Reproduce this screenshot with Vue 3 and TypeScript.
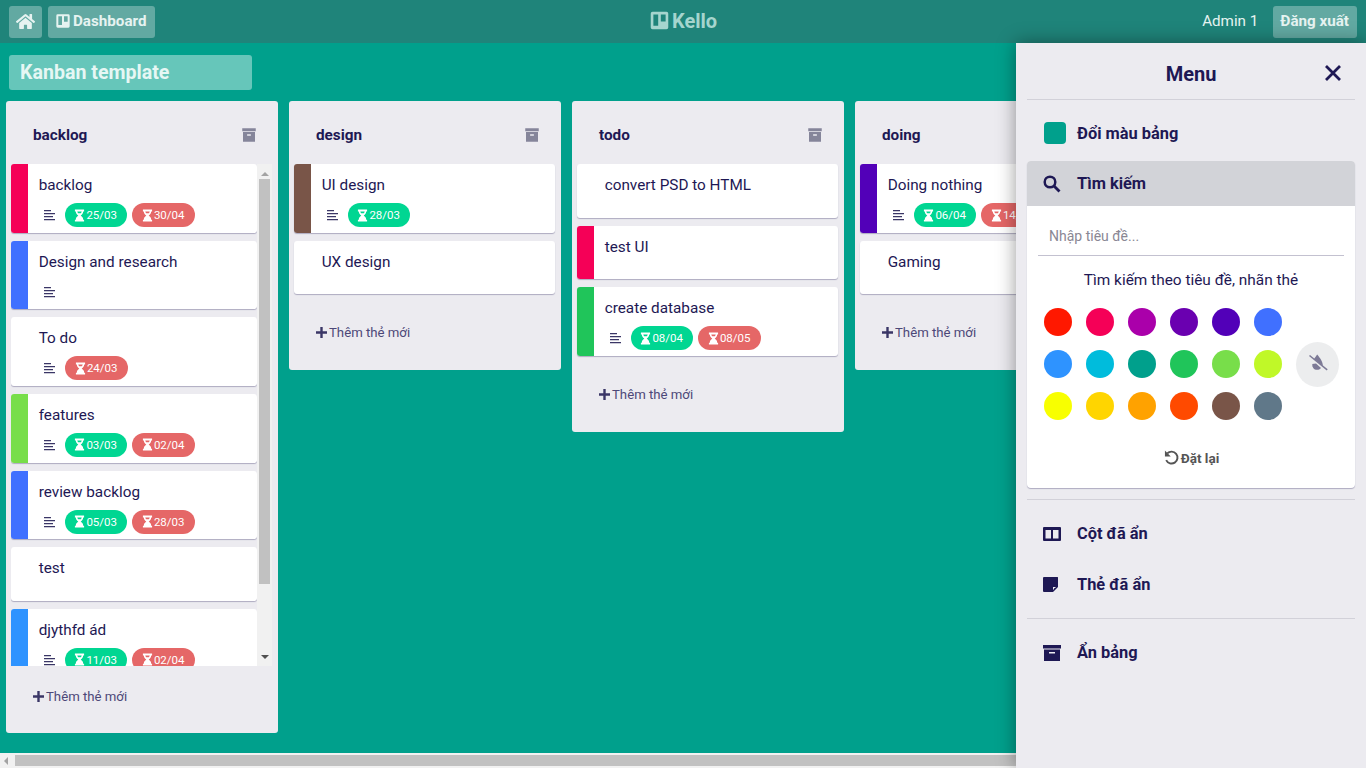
<script setup lang="ts">
interface Card {
  title: string
  color?: string
  lines?: boolean
  start?: string
  end?: string
}
interface Column {
  name: string
  cards: Card[]
  scroll?: boolean
}

const columns: Column[] = [
  {
    name: 'backlog',
    scroll: true,
    cards: [
      { title: 'backlog', color: '#f50057', lines: true, start: '25/03', end: '30/04' },
      { title: 'Design and research', color: '#4070ff', lines: true },
      { title: 'To do', lines: true, end: '24/03' },
      { title: 'features', color: '#78de4a', lines: true, start: '03/03', end: '02/04' },
      { title: 'review backlog', color: '#4070ff', lines: true, start: '05/03', end: '28/03' },
      { title: 'test' },
      { title: 'djythfd ád', color: '#2e93ff', lines: true, start: '11/03', end: '02/04' },
    ],
  },
  {
    name: 'design',
    cards: [
      { title: 'UI design', color: '#795548', lines: true, start: '28/03' },
      { title: 'UX design' },
    ],
  },
  {
    name: 'todo',
    cards: [
      { title: 'convert PSD to HTML' },
      { title: 'test UI', color: '#f50057' },
      { title: 'create database', color: '#20c55a', lines: true, start: '08/04', end: '08/05' },
    ],
  },
  {
    name: 'doing',
    cards: [
      { title: 'Doing nothing', color: '#5200b8', lines: true, start: '06/04', end: '14/04' },
      { title: 'Gaming' },
    ],
  },
]

const swatches = [
  '#ff1800', '#f50057', '#aa00aa', '#6a00b0', '#5200b8', '#4070ff',
  '#2e93ff', '#00bcdc', '#00a08c', '#20c55a', '#78de4a', '#c0f828',
  '#f8ff00', '#ffd500', '#ffa200', '#ff4a00', '#795548', '#607889',
]

const archivePath = 'M3 3h18v4H3zM4 8h16v13H4zM9.500 11v2h5v-2z'
const boardPath = 'M4 2h16a2 2 0 0 1 2 2v16a2 2 0 0 1-2 2H4a2 2 0 0 1-2-2V4a2 2 0 0 1 2-2zM5 5v13h5.500V5zM13.500 5v8H19V5z'
const hourglassPath = 'M1 0h10v2H10c0 2-1 3.200-2.700 4.500C9 7.800 10 9 10 11h1v2H1v-2h1c0-2 1-3.200 2.700-4.500C3 5.200 2 4 2 2H1zM3.600 2c.1 1 .5 1.500 1 2h2.800c.5-.5.9-1 1-2z'
</script>

<template>
  <div class="app">
    <header class="topbar">
      <div class="top-left">
        <button class="top-btn icon-only">
          <svg width="19" height="17" viewBox="0 0 576 512"><path fill="currentColor" d="M280.400 148.300 96 300.100V464a16 16 0 0 0 16 16l112-.3a16 16 0 0 0 15.900-16V368a16 16 0 0 1 16-16h64a16 16 0 0 1 16 16v95.600a16 16 0 0 0 16 16.100l112 .3a16 16 0 0 0 16-16V300L295.700 148.300a12.200 12.200 0 0 0-15.300 0zM571.600 251.500 488 182.600V44.100a12 12 0 0 0-12-12h-56a12 12 0 0 0-12 12v72.600L318.500 43a48 48 0 0 0-61 0L4.300 251.500a12 12 0 0 0-1.600 16.900l25.500 31A12 12 0 0 0 45.200 301l235.200-193.700a12.200 12.200 0 0 1 15.300 0L530.900 301a12 12 0 0 0 16.900-1.600l25.500-31a12 12 0 0 0-1.700-16.900z"/></svg>
        </button>
        <button class="top-btn">
          <svg width="16" height="16" viewBox="0 0 24 24"><path fill="currentColor" fill-rule="evenodd" :d="boardPath"/></svg>
          Dashboard
        </button>
      </div>
      <div class="logo">
        <svg width="21" height="21" viewBox="0 0 24 24"><path fill="currentColor" fill-rule="evenodd" :d="boardPath"/></svg>
        Kello
      </div>
      <div class="top-right">
        <span class="user">Admin 1</span>
        <button class="top-btn">Đăng xuất</button>
      </div>
    </header>

    <main class="board">
      <div class="board-title">Kanban template</div>
      <div class="columns">
        <section v-for="col in columns" :key="col.name" class="column">
          <div class="col-head">
            <span class="col-name">{{ col.name }}</span>
            <svg class="col-archive" width="18" height="18" viewBox="0 0 24 24"><path fill="currentColor" fill-rule="evenodd" :d="archivePath"/></svg>
          </div>
          <div class="col-body" :class="{ scrolling: col.scroll }">
            <div class="card-list">
              <article v-for="card in col.cards" :key="card.title" class="card" :class="{ tall: card.lines }">
                <span class="stripe" :style="{ background: card.color || 'transparent' }"></span>
                <div class="card-main">
                  <div class="card-title">{{ card.title }}</div>
                  <div v-if="card.lines" class="card-meta">
                    <svg class="lines" width="11" height="12" viewBox="0 0 11 12"><path fill="#3a3666" d="M0 1h7v1.200H0zM0 4h11v1.200H0zM0 7h9v1.200H0zM0 10h11v1.200H0z"/></svg>
                    <span v-if="card.start" class="badge green">
                      <svg width="11" height="13" viewBox="0 0 12 13"><path fill="#fff" fill-rule="evenodd" :d="hourglassPath"/></svg>{{ card.start }}
                    </span>
                    <span v-if="card.end" class="badge red">
                      <svg width="11" height="13" viewBox="0 0 12 13"><path fill="#fff" fill-rule="evenodd" :d="hourglassPath"/></svg>{{ card.end }}
                    </span>
                  </div>
                </div>
              </article>
            </div>
            <div v-if="col.scroll" class="vscroll">
              <span class="arrow up"></span>
              <span class="vthumb"></span>
              <span class="arrow down"></span>
            </div>
          </div>
          <div class="add-card">
            <svg width="11" height="11" viewBox="0 0 12 12"><path fill="#3a3666" d="M4.700 0h2.600v4.700H12v2.600H7.300V12H4.700V7.300H0V4.700h4.700z"/></svg>
            Thêm thẻ mới
          </div>
        </section>
      </div>
    </main>

    <div class="hscroll">
      <span class="arrow left"></span>
      <span class="hthumb"></span>
    </div>

    <aside class="menu">
      <div class="menu-head">
        <span>Menu</span>
        <svg class="menu-close" width="18" height="18" viewBox="0 0 18 18"><path d="M2 2l14 14M16 2L2 16" stroke="#1e1854" stroke-width="2.800" fill="none"/></svg>
      </div>
      <div class="menu-row color-row">
        <span class="board-color"></span>
        Đổi màu bảng
      </div>
      <div class="search-box">
        <div class="search-head">
          <svg width="18" height="18" viewBox="0 0 18 18"><circle cx="7" cy="7" r="5.300" fill="none" stroke="#1e1854" stroke-width="2.500"/><path d="M11 11L16.500 16.500" stroke="#1e1854" stroke-width="2.800"/></svg>
          Tìm kiếm
        </div>
        <div class="search-body">
          <input class="search-input" type="text" placeholder="Nhập tiêu đề..." />
          <p class="hint">Tìm kiếm theo tiêu đề, nhãn thẻ</p>
          <div class="palette">
            <div class="dots">
              <span v-for="c in swatches" :key="c" class="dot" :style="{ background: c }"></span>
            </div>
            <button class="no-color">
              <svg width="20" height="20" viewBox="0 0 20 20"><path fill="#7d7a96" d="M9.200.5L6 5l8.800 7C15 8 12 4 9.200.5z"/><path fill="#7d7a96" d="M4.300 10L8 9.500l5 4.500c-1 1.300-2.500 1.800-4 1.800-3 0-5-2.300-4.700-5.800z"/><path d="M1.500 1.500L19.200 15.800" stroke="#7d7a96" stroke-width="1.500"/></svg>
            </button>
          </div>
          <div class="reset">
            <svg width="17" height="17" viewBox="0 0 16 16"><path d="M4 4.200A5.600 5.600 0 1 1 3 10.500" fill="none" stroke="#555" stroke-width="1.800"/><path fill="#555" d="M1.800 1.500v5.500h5.500z"/></svg>
            Đặt lại
          </div>
        </div>
      </div>
      <hr class="divider" />
      <div class="menu-row">
        <svg width="18" height="16" viewBox="0 0 18 16"><path fill="#1e1854" fill-rule="evenodd" d="M1 1h16a1 1 0 0 1 1 1v12a1 1 0 0 1-1 1H1a1 1 0 0 1-1-1V2a1 1 0 0 1 1-1zM2.500 4v8.500H8V4zM10 4v8.500h5.500V4z"/></svg>
        Cột đã ẩn
      </div>
      <div class="menu-row">
        <svg width="18" height="16" viewBox="0 0 18 16"><path fill="#1e1854" fill-rule="evenodd" d="M1 0h13.500a.5.5 0 0 1 .5.500V10l-5 5H1a1 1 0 0 1-1-1V1a1 1 0 0 1 1-1zM10 10v3l1.200-1.200V11h.8l1-1z"/></svg>
        Thẻ đã ẩn
      </div>
      <hr class="divider" />
      <div class="menu-row">
        <svg width="18" height="16" viewBox="0 0 18 16"><path fill="#1e1854" fill-rule="evenodd" d="M0 0h18v3.500H0zM1 4.500h16V16H1zM6 7v1.600h6V7z"/></svg>
        Ẩn bảng
      </div>
    </aside>
  </div>
</template>

<style>
html, body {
  margin: 0;
  overflow: hidden;
}
</style>

<style scoped>
.app {
  position: relative;
  display: flex;
  flex-direction: column;
  height: 768px;
  overflow: hidden;
  font-family: Roboto, "Noto Sans", sans-serif;
  color: #1e1854;
}
.topbar {
  display: grid;
  grid-template-columns: 1fr auto 1fr;
  align-items: center;
  height: 43px;
  flex: none;
  padding: 0 9px;
  box-sizing: border-box;
  background: #1f847a;
  color: #fff;
}
.top-left, .top-right {
  display: flex;
  align-items: center;
}
.top-left {
  gap: 6px;
}
.top-right {
  justify-content: flex-end;
  gap: 15px;
}
.top-btn {
  display: flex;
  align-items: center;
  gap: 2px;
  height: 32px;
  padding: 0 8px 2px 7px;
  border: none;
  border-radius: 3px;
  background: rgba(255, 255, 255, 0.3);
  color: #e6f3f1;
  font: 700 15.200px Roboto, sans-serif;
}
.top-btn.icon-only {
  width: 33px;
  justify-content: center;
  padding: 0;
}
.logo {
  display: flex;
  align-items: center;
  gap: 2px;
  padding-bottom: 2px;
  font-size: 20px;
  font-weight: 700;
  color: #a5d5ce;
}
.user {
  font-size: 15.200px;
  padding-bottom: 2px;
  color: #e6f3f1;
}
.board {
  flex: 1;
  min-height: 0;
  overflow: hidden;
  background: #00a08c;
  padding: 12px 0 0 6px;
  box-sizing: border-box;
}
.board-title {
  width: 243px;
  height: 35px;
  line-height: 35px;
  margin: 0 0 11px 3px;
  padding-left: 11px;
  box-sizing: border-box;
  border-radius: 3px;
  background: rgba(255, 255, 255, 0.4);
  color: #e6f7f4;
  font-size: 19.600px;
  font-weight: 700;
}
.columns {
  display: flex;
  align-items: flex-start;
  gap: 11px;
}
.column {
  flex: none;
  width: 272px;
  background: #ecebf0;
  border-radius: 3px;
}
.col-head {
  display: flex;
  align-items: center;
  justify-content: space-between;
  height: 63px;
  padding: 5px 20px 0 27px;
  box-sizing: border-box;
}
.col-name {
  font-size: 15.300px;
  font-weight: 700;
}
.col-archive {
  color: #85859a;
}
.col-body {
  display: flex;
  margin: 0 6px 0 5px;
}
.col-body.scrolling {
  height: 502px;
  overflow: hidden;
}
.card-list {
  flex: 1;
  min-width: 0;
}
.card {
  display: flex;
  height: 53.670px;
  margin-bottom: 8px;
  background: #fff;
  border-radius: 3px;
  overflow: hidden;
  box-shadow: 0 1px 1px #aeabc0;
}
.card.tall {
  height: 68.670px;
}
.stripe {
  flex: none;
  width: 17px;
}
.card-main {
  padding: 12px 0 0 10.700px;
}
.card-title {
  font-size: 15.300px;
  line-height: 18px;
}
.card-meta {
  display: flex;
  align-items: center;
  gap: 5px;
  min-height: 24px;
  margin-top: 9px;
}
.lines {
  margin: 0 5px;
}
.badge {
  display: flex;
  align-items: center;
  justify-content: center;
  gap: 1px;
  width: 62px;
  height: 24px;
  border-radius: 12px;
  color: #fff;
  font-size: 11.500px;
}
.badge.green {
  background: #00d692;
}
.badge.red {
  width: 63px;
  background: #e56767;
}
.vscroll {
  width: 15px;
  flex: none;
  display: flex;
  flex-direction: column;
  align-items: center;
  background: #f1f1f1;
}
.vthumb {
  width: 11px;
  height: 405px;
  margin: 3px 0 auto;
  background: #c1c1c1;
}
.arrow {
  display: block;
  flex: none;
  width: 0;
  height: 0;
  border: 4px solid transparent;
}
.arrow.up {
  border-top: none;
  border-bottom-color: #a3a3a3;
  margin-top: 8px;
}
.arrow.down {
  border-bottom: none;
  border-top-color: #505050;
  margin-bottom: 7px;
}
.arrow.left {
  border-left: none;
  border-right-color: #a3a3a3;
  margin: 0 4px;
}
.add-card {
  display: flex;
  align-items: center;
  gap: 2px;
  height: 68px;
  padding: 0 0 7px 27px;
  box-sizing: border-box;
  font-size: 13.200px;
  color: #4c4878;
}
.scrolling + .add-card {
  height: 67px;
}
.hscroll {
  display: flex;
  align-items: center;
  flex: none;
  height: 15px;
  background: #f1f1f1;
}
.hthumb {
  width: 1100px;
  height: 11px;
  margin-left: 3px;
  background: #c1c1c1;
}
.menu {
  position: absolute;
  top: 43px;
  right: 0;
  bottom: 0;
  width: 350px;
  padding: 0 11px;
  box-sizing: border-box;
  background: #ecebf0;
  box-shadow: 0 0 18px rgba(0, 0, 0, 0.4);
}
.menu-head {
  position: relative;
  height: 57px;
  padding-top: 5px;
  box-sizing: border-box;
  display: flex;
  align-items: center;
  justify-content: center;
  font-size: 20px;
  font-weight: 700;
  border-bottom: 1px solid #d2d1d9;
}
.menu-close {
  position: absolute;
  right: 13px;
  top: 21px;
}
.menu-row {
  display: flex;
  align-items: center;
  gap: 16px;
  height: 51px;
  padding-left: 16px;
  font-size: 16.400px;
  font-weight: 700;
}
.color-row {
  height: 61px;
  padding: 5px 0 0 17px;
  box-sizing: border-box;
  gap: 11px;
}
.board-color {
  width: 22px;
  height: 22px;
  border-radius: 4px;
  background: #00a08c;
}
.search-box {
  border-radius: 4px;
  background: #fff;
  box-shadow: 0 1px 1px #aeabc0;
}
.search-head {
  display: flex;
  align-items: center;
  gap: 16px;
  height: 45px;
  padding-left: 16px;
  border-radius: 4px 4px 0 0;
  background: #d2d3d8;
  font-size: 16.400px;
  font-weight: 700;
}
.search-body {
  height: 282px;
  box-sizing: border-box;
  padding: 10px 11px 0;
}
.search-input {
  display: block;
  width: 100%;
  height: 40px;
  padding: 0 11px;
  box-sizing: border-box;
  border: none;
  border-bottom: 1px solid #c3c1d0;
  outline: none;
  font: 14px Roboto, sans-serif;
}
.search-input::placeholder {
  color: #8a8794;
}
.hint {
  margin: 15px 0 0;
  text-align: center;
  font-size: 15.400px;
  line-height: 18px;
}
.palette {
  display: flex;
  align-items: center;
  margin: 19px 0 0 6px;
}
.dots {
  display: grid;
  grid-template-columns: repeat(6, 28px);
  gap: 14px;
}
.dot {
  width: 28px;
  height: 28px;
  border-radius: 50%;
}
.no-color {
  display: flex;
  align-items: center;
  justify-content: center;
  width: 43px;
  height: 45px;
  margin-left: 14px;
  padding: 0;
  border: none;
  border-radius: 50%;
  background: #ecedee;
}
.reset {
  display: flex;
  align-items: center;
  justify-content: center;
  gap: 1px;
  margin-top: 29px;
  font-size: 13.500px;
  font-weight: 700;
  color: #555;
}
.divider {
  margin: 11px 0 8px;
  border: none;
  border-top: 1px solid #d2d1d9;
}
.divider ~ .divider {
  margin: 8px 0 8px;
}
</style>
